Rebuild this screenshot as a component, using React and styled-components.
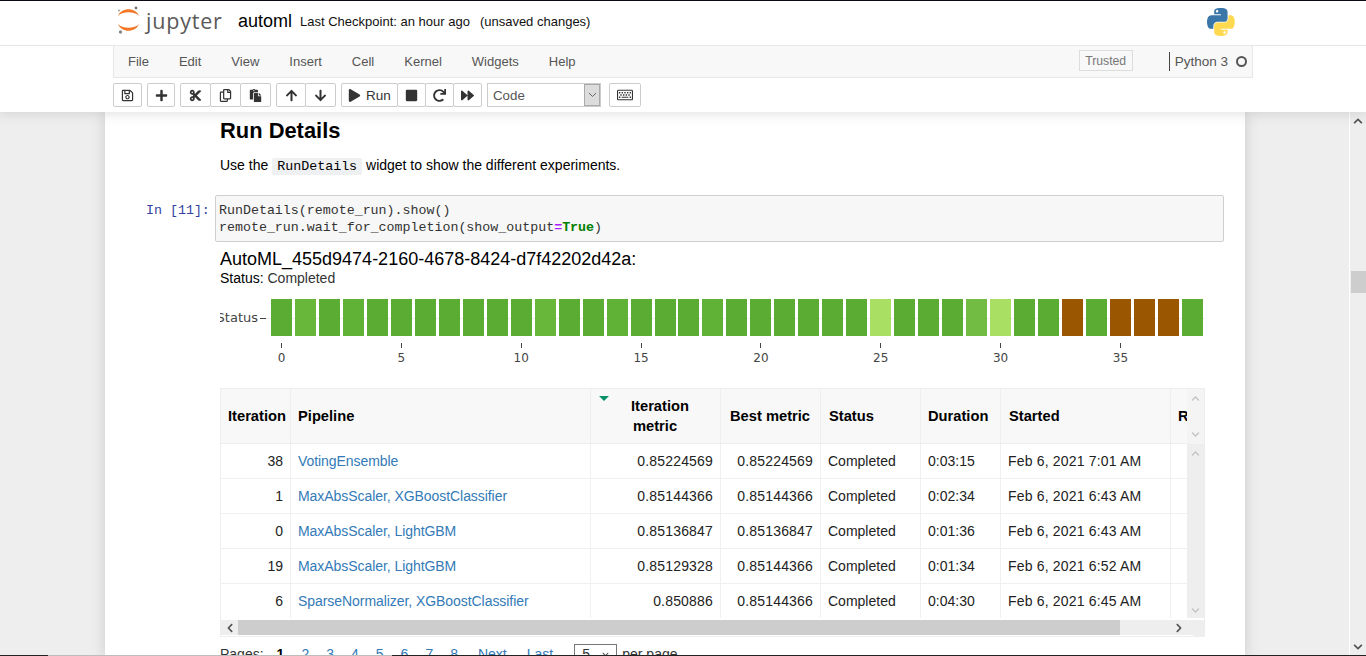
import React from 'react';
import styled, { createGlobalStyle } from 'styled-components';
import { FaRegSave, FaPlus, FaCut, FaRegCopy, FaPaste, FaArrowUp, FaArrowDown, FaPlay, FaStop, FaRedo, FaForward, FaRegKeyboard, FaChevronUp, FaChevronDown, FaChevronLeft, FaChevronRight } from 'react-icons/fa';

const Global = createGlobalStyle`
  html, body { margin: 0; height: 656px; overflow: hidden; background: #fff; }
  #root { height: 656px; }
  * { box-sizing: border-box; }
`;

const Page = styled.div`
  height: 656px; display: flex; flex-direction: column; overflow: hidden;
  font-family: "Liberation Sans", Arial, sans-serif; font-size: 14px; color: #000;
  border-top: 1px solid #0a0a14;
`;
const Top = styled.header`
  flex: none; height: 111px; background: #fff; display: flex; flex-direction: column; position: relative; z-index: 2;
  box-shadow: 0 0 12px 1px rgba(87,87,87,.2);
`;
const TitleBar = styled.div`
  flex: none; height: 45px; border-bottom: 1px solid #e7e7e7; padding: 0 0 3px 116px; display: flex; align-items: center;
`;
const LogoBox = styled.div`flex: none; display: flex; align-items: center; width: 122px;`;
const LogoWord = styled.span`font-family: "Open Sans", sans-serif; font-size: 21.5px; color: #5a5a5a; letter-spacing: 0.8px; margin-left: 4px; line-height: 1; margin-top: -1px;`;
const NotebookName = styled.span`font-size: 18px; color: #000;`;
const Checkpoint = styled.span`font-size: 13px; margin-left: 8px; color: #111;`;
const Autosave = styled.span`font-size: 13px; margin-left: 10px; color: #111;`;
const PyLogo = styled.svg`width: 28px; height: 28px; margin: 0 131px 0 auto;`;
const MenuBar = styled.nav`
  flex: none; height: 32px; width: 1140px; margin-left: 113px; background: #f8f8f8; border: 1px solid #e7e7e7; border-top: none;
  display: flex; align-items: center; padding-left: 14px; color: #555;
`;
const MenuItem = styled.span`font-size: 13px; color: #555; margin-right: 30px;`;
const Right = styled.div`margin-left: auto; display: flex; align-items: center;`;
const Trusted = styled.span`border: 1px solid #ddd; font-size: 12.2px; color: #777; height: 21px; width: 54px; display: flex; align-items: center; justify-content: center; margin-right: 36px; margin-top: -2px;`;
const Kernel = styled.span`border-left: 1px solid #444; height: 19px; line-height: 19px; padding-left: 5px; color: #555; font-size: 13.5px;`;
const KernelDot = styled.span`width: 11px; height: 11px; border-radius: 50%; border: 2px solid #555; margin: 0 5px 0 8px;`;
const ToolBar = styled.div`flex: none; display: flex; margin: 5px 0 0 113px; gap: 5px; align-items: flex-start;`;
const Group = styled.div`display: flex;`;
const Btn = styled.button`
  height: 24px; width: ${p => p.$w}px; border: 1px solid #ccc; background: #fff; color: #333; padding: 0; margin-left: ${p => p.$ml || 0}px;
  display: flex; align-items: center; justify-content: center; gap: 5px; font-size: 13.5px; font-family: inherit; border-radius: 2px;
  svg { font-size: ${p => p.$i || 13}px; }
`;
const Select = styled.div`
  width: 114px; height: 24px; border: 1px solid #ccc; display: flex; align-items: center; font-size: 13.3px; color: #555; padding-left: 5px; background: #fff;
`;
const SelectArrow = styled.span`
  margin-left: auto; width: 16px; height: 22px; background: #dcdcdc; border: 1px solid #aaa; display: flex; align-items: center; justify-content: center;
`;
const Main = styled.div`flex: 1; min-height: 0; display: flex; background: #eee;`;
const Sheet = styled.main`
  width: 1140px; margin-left: 105px; background: #fff; box-shadow: 0 0 12px 1px rgba(87,87,87,.2); overflow: hidden; padding: 0 0 0 115px;
`;
const H2 = styled.h2`font-size: 21.9px; font-weight: 700; margin: 6px 0 0; line-height: 26px; height: 26px;`;
const Para = styled.p`margin: 11px 0 0; font-size: 14px; line-height: 20px; height: 20px;`;
const InlineCode = styled.code`font-family: "Liberation Mono", monospace; font-size: 13.33px; background: #eff0f1; padding: 1px 5px; border-radius: 2px;`;
const Cell = styled.section`display: flex; margin: 20px 0 0 -74px;`;
const Prompt = styled.div`width: 69px; font-family: "Liberation Mono", monospace; font-size: 13.3px; color: #303f9f; line-height: 17px; padding-top: 7px; white-space: pre;`;
const CodeBox = styled.pre`
  margin: 0; width: 1009px; height: 47px; background: #f7f7f7; border: 1px solid #cfcfcf; border-radius: 2px;
  font-family: "Liberation Mono", monospace; font-size: 13.3px; line-height: 17px; padding: 6px 3px; color: #333;
`;
const Op = styled.span`color: #aa22ff; font-weight: 700;`;
const Kw = styled.span`color: #008000; font-weight: 700;`;
const RunTitle = styled.div`font-size: 18px; margin-top: 7px; line-height: 21px;`;
const StatusLine = styled.div`font-size: 14px; line-height: 18px; margin-top: -1px; color: #333; strong { font-weight: 400; color: #000; }`;
const Chart = styled.svg`display: block; width: 985px; height: 90px; margin-top: 4px;`;
const TableFrame = styled.div`width: 985px; margin-top: 7px; border: 1px solid #eee; display: flex; flex-direction: column; height: 249px;`;
const TableTop = styled.div`display: flex; flex: 1; min-height: 0;`;
const Columns = styled.div`flex: 1; min-width: 0; overflow: hidden;`;
const COLS = '70px 300px 130px 100px 100px 80px 170px 60px';
const HeadRow = styled.div`display: grid; grid-template-columns: ${COLS}; height: 55px; background: #f8f8f8; border-bottom: 1px solid #eee;`;
const BodyRow = styled.div`display: grid; grid-template-columns: ${COLS}; height: 35px; border-bottom: 1px solid #f0f0f0;`;
const HeadCell = styled.div`
  border-right: 1px solid #eee; font-weight: 700; font-size: 14.7px; line-height: 20px; display: flex; align-items: center; padding: 0 0 0 ${p => p.$pl || 7}px; white-space: nowrap; position: relative;
`;
const HeadStack = styled.div`display: flex; flex-direction: column;`;
const HeadLine = styled.span`padding-left: ${p => p.$pl}px;`;
const SortMark = styled.span`position: absolute; left: 8px; top: 7px; width: 0; height: 0; border-left: 5px solid transparent; border-right: 5px solid transparent; border-top: 5px solid #099268;`;
const DataCell = styled.div`
  border-right: 1px solid #f0f0f0; display: flex; align-items: center; padding: 0 7px; font-size: 14px; color: #222; white-space: nowrap;
  justify-content: ${p => p.$num ? 'flex-end' : 'flex-start'};
  letter-spacing: ${p => p.$wide ? '.18px' : '0'};
`;
const Link = styled.a`color: #337ab7; letter-spacing: -.06px;`;
const VBarWrap = styled.div`width: 17px; flex: none; display: flex; flex-direction: column;`;
const VBar = styled.div`width: 17px; background: ${p => p.$bg}; height: ${p => p.$h ? `${p.$h}px` : 'auto'}; flex: ${p => p.$h ? 'none' : 1}; display: flex; flex-direction: column; align-items: center; justify-content: space-between; padding: 5px 0 ${p => p.$pb}px; color: #c4c4c4; font-size: 9px;`;
const HBar = styled.div`flex: none; height: 18px; display: flex; background: #fff; border-top: 2px solid #fff;`;
const HTrack = styled.div`flex: 1; background: #eee; display: flex; align-items: center; font-size: 10px; color: #505050; height: 15px; padding: 0 6px 0 0;`;
const HThumb = styled.div`width: 882px; height: 15px; background: #cdcdcd; margin: 0 50px 0 0;`;
const HArrow = styled.span`width: 17px; display: flex; align-items: center; justify-content: center; margin-left: ${p => p.$end ? 'auto' : 0};`;
const HCorner = styled.div`width: 17px; background: #eee;`;
const Pager = styled.div`display: flex; align-items: center; margin-top: 7px; font-size: 14px; color: #333; height: 20px; white-space: nowrap;`;
const PageNo = styled.a`color: ${p => p.$on ? '#000' : '#337ab7'}; font-weight: ${p => p.$on ? 700 : 400}; margin-left: ${p => p.$l}px;`;
const PageSel = styled.div`width: 43px; height: 20px; border: 1px solid #777; margin: 0 5px 0 21px; padding: 0 7px; display: flex; align-items: center; justify-content: space-between; font-size: 14px; svg { font-size: 7px; color: #555; }`;
const PageBar = styled.aside`width: 17px; margin-left: auto; flex: none; background: #eee; border-left: 1px solid #fff; display: flex; flex-direction: column; align-items: center; color: #505050; font-size: 10px;`;
const PageThumb = styled.div`width: 15px; height: 22px; background: #cdcdcd; margin-top: 145px;`;
const PageUp = styled.span`margin-top: 4px; height: 10px; display: block;`;
const PageDown = styled.span`margin-top: auto; margin-bottom: 1px; display: block;`;
const BottomEdge = styled.div`flex: none; height: 1px; display: flex; background: #222;`;
const EdgeSegment = styled.span`width: ${p => p.$w}px; margin-left: ${p => p.$l}px; background: #bdbdbd;`;

const statusColors = Array.from({ length: 39 }, (_, i) => {
  if ([33, 35, 36, 37].includes(i)) return '#9a5600';
  if (i === 25 || i === 30) return '#a9e064';
  if (i === 29) return '#72bc44';
  if (i === 1 || i === 11) return '#68b63a';
  if (i === 3 || i === 14 || i === 18) return '#60b236';
  return '#5aad32';
});

const rows = [
  ['38', 'VotingEnsemble', '0.85224569', '0.85224569', '0:03:15', 'Feb 6, 2021 7:01 AM'],
  ['1', 'MaxAbsScaler, XGBoostClassifier', '0.85144366', '0.85144366', '0:02:34', 'Feb 6, 2021 6:43 AM'],
  ['0', 'MaxAbsScaler, LightGBM', '0.85136847', '0.85136847', '0:01:36', 'Feb 6, 2021 6:43 AM'],
  ['19', 'MaxAbsScaler, LightGBM', '0.85129328', '0.85144366', '0:01:34', 'Feb 6, 2021 6:52 AM'],
  ['6', 'SparseNormalizer, XGBoostClassifier', '0.850886', '0.85144366', '0:04:30', 'Feb 6, 2021 6:45 AM'],
];

const PITCH = 23.97;

export default function App() {
  return (
    <Page>
      <Global />
      <Top>
        <TitleBar>
          <LogoBox>
            <svg width="26" height="32" viewBox="0 0 26 32">
              <path d="M2 10 C5 1 20 1 23 10 C19 5 6 5 2 10Z" fill="#f37726" />
              <path d="M2 18 C5 27 20 27 23 18 C19 23 6 23 2 18Z" fill="#f37726" />
              <circle cx="20" cy="2" r="1.4" fill="#767677" />
              <circle cx="3" cy="4.5" r="1" fill="#9e9e9e" />
              <circle cx="4.5" cy="26" r="1.7" fill="#8a8a8a" />
            </svg>
            <LogoWord>jupyter</LogoWord>
          </LogoBox>
          <NotebookName>automl</NotebookName>
          <Checkpoint>Last Checkpoint: an hour ago</Checkpoint>
          <Autosave>(unsaved changes)</Autosave>
          <PyLogo viewBox="0 0 112 112">
            <path fill="#3a76a8" d="M54.92 0C50.33.02 45.96.41 42.11 1.09 30.77 3.09 28.71 7.29 28.71 15.03v10.22h26.8v3.41H18.65c-7.79 0-14.61 4.68-16.74 13.59-2.46 10.21-2.57 16.59 0 27.25 1.91 7.94 6.46 13.59 14.25 13.59h9.21V71.84c0-8.85 7.66-16.66 16.75-16.66h26.77c7.45 0 13.4-6.14 13.4-13.63V15.03c0-7.27-6.13-12.73-13.4-13.94C63.96.32 59.5-.02 54.92 0zM40.43 8.22c2.77 0 5.03 2.3 5.03 5.13 0 2.82-2.26 5.1-5.03 5.1-2.78 0-5.03-2.28-5.03-5.1 0-2.83 2.25-5.13 5.03-5.13z" />
            <path fill="#ffd94f" d="M85.64 28.66v11.91c0 9.24-7.83 17.01-16.75 17.01H42.11c-7.33 0-13.4 6.28-13.4 13.63v25.53c0 7.27 6.32 11.54 13.4 13.63 8.48 2.49 16.62 2.94 26.77 0 6.75-1.95 13.4-5.89 13.4-13.63V86.5H55.51v-3.41h40.2c7.79 0 10.69-5.43 13.4-13.59 2.8-8.4 2.68-16.47 0-27.25-1.93-7.77-5.6-13.59-13.4-13.59zM70.58 93.33c2.78 0 5.03 2.28 5.03 5.1 0 2.83-2.25 5.13-5.03 5.13-2.77 0-5.03-2.3-5.03-5.13 0-2.82 2.26-5.1 5.03-5.1z" />
          </PyLogo>
        </TitleBar>
        <MenuBar>
          <MenuItem>File</MenuItem>
          <MenuItem>Edit</MenuItem>
          <MenuItem>View</MenuItem>
          <MenuItem>Insert</MenuItem>
          <MenuItem>Cell</MenuItem>
          <MenuItem>Kernel</MenuItem>
          <MenuItem>Widgets</MenuItem>
          <MenuItem>Help</MenuItem>
          <Right>
            <Trusted>Trusted</Trusted>
            <Kernel>Python 3</Kernel>
            <KernelDot />
          </Right>
        </MenuBar>
        <ToolBar>
          <Group><Btn $w={29}><FaRegSave /></Btn></Group>
          <Group><Btn $w={28}><FaPlus /></Btn></Group>
          <Group>
            <Btn $w={31}><FaCut /></Btn>
            <Btn $w={31} $ml={-1}><FaRegCopy /></Btn>
            <Btn $w={31} $ml={-1}><FaPaste /></Btn>
          </Group>
          <Group>
            <Btn $w={30}><FaArrowUp /></Btn>
            <Btn $w={31} $ml={-1}><FaArrowDown /></Btn>
          </Group>
          <Group>
            <Btn $w={57}><FaPlay />Run</Btn>
            <Btn $w={29} $ml={-1}><FaStop /></Btn>
            <Btn $w={29} $ml={-1}><FaRedo /></Btn>
            <Btn $w={29} $ml={-1}><FaForward /></Btn>
          </Group>
          <Select>
            Code
            <SelectArrow>
              <svg width="9" height="6" viewBox="0 0 9 6"><path d="M1 1 L4.5 4.5 L8 1" fill="none" stroke="#666" strokeWidth="1" /></svg>
            </SelectArrow>
          </Select>
          <Btn $w={32} $ml={3} $i={16}><FaRegKeyboard /></Btn>
        </ToolBar>
      </Top>
      <Main>
        <Sheet>
          <H2>Run Details</H2>
          <Para>Use the <InlineCode>RunDetails</InlineCode> widget to show the different experiments.</Para>
          <Cell>
            <Prompt>In [11]:</Prompt>
            <CodeBox>{'RunDetails(remote_run).show()\nremote_run.wait_for_completion(show_output'}<Op>=</Op><Kw>True</Kw>{')'}</CodeBox>
          </Cell>
          <RunTitle>AutoML_455d9474-2160-4678-8424-d7f42202d42a:</RunTitle>
          <StatusLine><strong>Status:</strong> Completed</StatusLine>
          <Chart viewBox="0 0 985 90">
            <line x1="46" x2="985" y1="27.5" y2="27.5" stroke="#eee" />
            {statusColors.map((c, i) => <rect key={i} x={Math.round(51 + PITCH * i)} y={8} width={21} height={37} fill={c} />)}
            <text x="38" y="31" textAnchor="end" fontFamily="DejaVu Sans, sans-serif" fontSize="13" fill="#444">Status</text>
            <line x1="40" x2="46" y1="27.5" y2="27.5" stroke="#444" />
            {[0, 5, 10, 15, 20, 25, 30, 35].map(t => (
              <g key={t}>
                <line x1={Math.round(61 + PITCH * t) + 0.5} x2={Math.round(61 + PITCH * t) + 0.5} y1={52} y2={57} stroke="#444" />
                <text x={61.5 + PITCH * t} y={71} textAnchor="middle" fontFamily="DejaVu Sans, sans-serif" fontSize="12" fill="#444">{t}</text>
              </g>
            ))}
          </Chart>
          <TableFrame>
            <TableTop>
              <Columns>
                <HeadRow>
                  <HeadCell>Iteration</HeadCell>
                  <HeadCell>Pipeline</HeadCell>
                  <HeadCell $pl={40}>
                    <SortMark />
                    <HeadStack>
                      <HeadLine $pl={0}>Iteration</HeadLine>
                      <HeadLine $pl={2}>metric</HeadLine>
                    </HeadStack>
                  </HeadCell>
                  <HeadCell $pl={9}>Best metric</HeadCell>
                  <HeadCell $pl={8}>Status</HeadCell>
                  <HeadCell>Duration</HeadCell>
                  <HeadCell $pl={8}>Started</HeadCell>
                  <HeadCell>Run</HeadCell>
                </HeadRow>
                {rows.map(r => (
                  <BodyRow key={r[0]}>
                    <DataCell $num>{r[0]}</DataCell>
                    <DataCell><Link>{r[1]}</Link></DataCell>
                    <DataCell $num $wide>{r[2]}</DataCell>
                    <DataCell $num $wide>{r[3]}</DataCell>
                    <DataCell>Completed</DataCell>
                    <DataCell>{r[4]}</DataCell>
                    <DataCell $wide>{r[5]}</DataCell>
                    <DataCell />
                  </BodyRow>
                ))}
              </Columns>
              <VBarWrap>
                <VBar $bg="#f4f4f4" $h={55} $pb={5}><FaChevronUp /><FaChevronDown /></VBar>
                <VBar $bg="#eee" $pb={3}><FaChevronUp /><FaChevronDown /></VBar>
              </VBarWrap>
            </TableTop>
            <HBar>
              <HTrack>
                <HArrow><FaChevronLeft /></HArrow>
                <HThumb />
                <HArrow $end><FaChevronRight /></HArrow>
              </HTrack>
              <HCorner />
            </HBar>
          </TableFrame>
          <Pager>
            Pages:
            <PageNo $on $l={13}>1</PageNo>
            <PageNo $l={17}>2</PageNo>
            <PageNo $l={17}>3</PageNo>
            <PageNo $l={17}>4</PageNo>
            <PageNo $l={17}>5</PageNo>
            <PageNo $l={17}>6</PageNo>
            <PageNo $l={17}>7</PageNo>
            <PageNo $l={17}>8</PageNo>
            <PageNo $l={20}>Next</PageNo>
            <PageNo $l={20}>Last</PageNo>
            <PageSel>5<FaChevronDown /></PageSel>
            per page
          </Pager>
        </Sheet>
        <PageBar>
          <PageUp><FaChevronUp /></PageUp>
          <PageThumb />
          <PageDown><FaChevronDown /></PageDown>
        </PageBar>
      </Main>
      <BottomEdge><EdgeSegment $l={48} $w={344} /></BottomEdge>
    </Page>
  );
}
